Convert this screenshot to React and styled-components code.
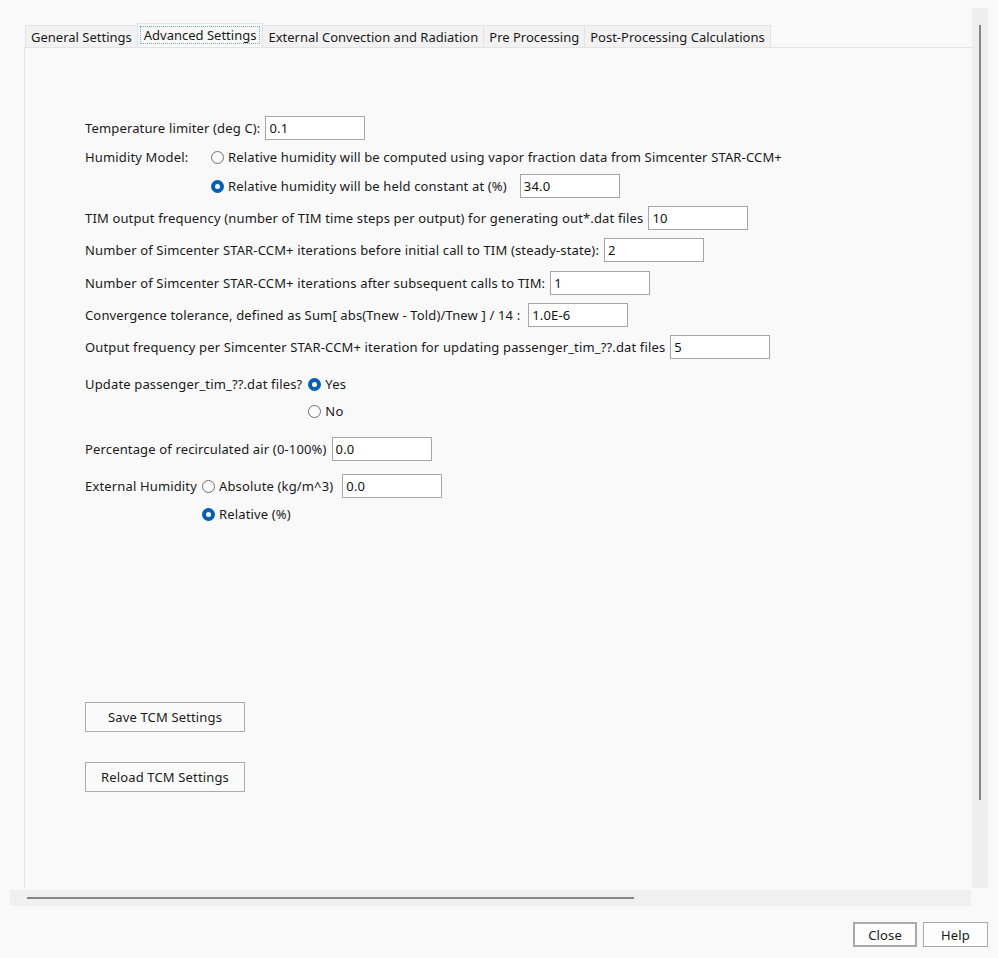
import React from "react";
import styled, { createGlobalStyle, css } from "styled-components";

const Global = createGlobalStyle`
  html, body { margin: 0; padding: 0; background: #f9f9f9; }
  body { font-family: "Noto Sans", "Open Sans", sans-serif; color: #1a1a1a; }
  * { box-sizing: border-box; }
`;

const Window = styled.div`
  width: 998px;
  height: 958px;
  background: #f9f9f9;
  padding: 8px 0 0 10px;
  display: flex;
  flex-direction: column;
  font-size: 13px;
  letter-spacing: 0.15px;
  overflow: hidden;
`;

const Viewport = styled.div`
  display: flex;
  height: 880px;
`;

const Scroller = styled.div`
  width: 962px;
  display: flex;
  flex-direction: column;
  padding-top: 15px;
`;

const TabStrip = styled.div`
  display: flex;
  align-items: flex-end;
  padding-left: 16px;
  height: 24px;
  letter-spacing: 0;
`;

const Tab = styled.div`
  height: 22px;
  padding: 0 5px;
  display: flex;
  align-items: center;
  background: #f2f2f2;
  border: 1px solid #e3e3e3;
  border-bottom: none;
  margin-left: -1px;
  white-space: nowrap;
  ${(p) =>
    p.$active &&
    css`
      height: 24px;
      background: #f9f9f9;
      padding: 2px 2px 3px;
      align-items: stretch;
    `}
`;

const FocusLabel = styled.span`
  display: flex;
  align-items: center;
  padding: 0 3px;
  border: 1px dotted #6aaecb;
`;

const Panel = styled.div`
  flex: 1;
  margin-left: 14px;
  border-left: 1px solid #e3e3e3;
  border-top: 1px solid #e3e3e3;
  padding: 68px 0 0 60px;
  display: flex;
  flex-direction: column;
  align-items: flex-start;
`;

const Row = styled.div`
  display: flex;
  align-items: center;
  min-height: 24px;
  margin-top: ${(p) => p.$mt || 0}px;
  white-space: nowrap;
`;

const Block = styled.div`
  display: flex;
  align-items: flex-start;
  margin-top: ${(p) => p.$mt || 0}px;
  white-space: nowrap;
`;

const Label = styled.span`
  display: inline-flex;
  align-items: center;
  height: 24px;
  min-width: ${(p) => (p.$w ? `${p.$w}px` : "auto")};
  margin-right: ${(p) => p.$gap ?? 5}px;
`;

const Options = styled.div`
  display: flex;
  flex-direction: column;
  gap: ${(p) => p.$gap || 0}px;
`;

const Option = styled.label`
  display: flex;
  align-items: center;
  height: 24px;
  gap: 4px;
`;

const RadioDot = styled.span`
  width: 13px;
  height: 13px;
  border-radius: 50%;
  flex: none;
  ${(p) =>
    p.$on
      ? css`
          background: #005fb8;
          display: flex;
          align-items: center;
          justify-content: center;
          &::after {
            content: "";
            width: 5px;
            height: 5px;
            border-radius: 50%;
            background: #ffffff;
          }
        `
      : css`
          border: 1px solid #6e6e6e;
          background: #fbfbfb;
        `}
`;

const Field = styled.div`
  width: 100px;
  height: 24px;
  border: 1px solid #a6a6a6;
  background: #ffffff;
  padding: 0 3px;
  display: flex;
  align-items: center;
  margin-left: ${(p) => p.$ml ?? 0}px;
  color: #111;
`;

const PushButton = styled.div`
  width: 160px;
  height: 30px;
  border: 1px solid #acacac;
  background: #fafafa;
  display: flex;
  align-items: center;
  justify-content: center;
  margin-top: ${(p) => p.$mt || 0}px;
`;

const VScroll = styled.div`
  width: 16px;
  background: #eeeeee;
  display: flex;
  justify-content: center;
  padding-top: 17px;
`;

const VThumb = styled.div`
  width: 2px;
  height: 775px;
  background: #868686;
`;

const HScroll = styled.div`
  width: 961px;
  height: 16px;
  margin-top: 2px;
  background: #f0f0f0;
  display: flex;
  align-items: center;
  padding-left: 17px;
`;

const HThumb = styled.div`
  width: 607px;
  height: 2px;
  background: #868686;
`;

const Footer = styled.div`
  display: flex;
  justify-content: flex-end;
  gap: 6px;
  padding-right: 10px;
  margin-top: 16px;
`;

const DialogButton = styled.div`
  height: 25px;
  width: ${(p) => p.$w}px;
  background: #fdfdfd;
  border: ${(p) => (p.$default ? "2px solid #a9a9a9" : "1px solid #a9a9a9")};
  display: flex;
  align-items: center;
  justify-content: center;
`;

const Radio = ({ on, children }) => (
  <Option>
    <RadioDot $on={on} />
    <span>{children}</span>
  </Option>
);

const tabs = [
  "General Settings",
  "Advanced Settings",
  "External Convection and Radiation",
  "Pre Processing",
  "Post-Processing Calculations",
];

export default function App() {
  return (
    <>
      <Global />
      <Window>
        <Viewport>
          <Scroller>
            <TabStrip>
              {tabs.map((t, i) =>
                i === 1 ? (
                  <Tab key={t} $active>
                    <FocusLabel>{t}</FocusLabel>
                  </Tab>
                ) : (
                  <Tab key={t}>{t}</Tab>
                )
              )}
            </TabStrip>
            <Panel>
              <Row>
                <Label>Temperature limiter (deg C):</Label>
                <Field>0.1</Field>
              </Row>

              <Block $mt={5}>
                <Label $w={126} $gap={0}>Humidity Model:</Label>
                <Options $gap={5}>
                  <Radio>Relative humidity will be computed using vapor fraction data from Simcenter STAR-CCM+</Radio>
                  <Row>
                    <Radio on>Relative humidity will be held constant at (%)</Radio>
                    <Field $ml={13}>34.0</Field>
                  </Row>
                </Options>
              </Block>

              <Row $mt={8}>
                <Label>TIM output frequency (number of TIM time steps per output) for generating out*.dat files</Label>
                <Field>10</Field>
              </Row>
              <Row $mt={8}>
                <Label>Number of Simcenter STAR-CCM+ iterations before initial call to TIM (steady-state):</Label>
                <Field>2</Field>
              </Row>
              <Row $mt={9}>
                <Label>Number of Simcenter STAR-CCM+ iterations after subsequent calls to TIM:</Label>
                <Field>1</Field>
              </Row>
              <Row $mt={8}>
                <Label>Convergence tolerance, defined as Sum[ abs(Tnew - Told)/Tnew ] / 14 :</Label>
                <Field $ml={3}>1.0E-6</Field>
              </Row>
              <Row $mt={8}>
                <Label>Output frequency per Simcenter STAR-CCM+ iteration for updating passenger_tim_??.dat files</Label>
                <Field>5</Field>
              </Row>

              <Block $mt={13}>
                <Label $gap={6}>Update passenger_tim_??.dat files?</Label>
                <Options $gap={3}>
                  <Radio on>Yes</Radio>
                  <Radio>No</Radio>
                </Options>
              </Block>

              <Row $mt={14}>
                <Label>Percentage of recirculated air (0-100%)</Label>
                <Field>0.0</Field>
              </Row>

              <Block $mt={13}>
                <Label $gap={5}>External Humidity</Label>
                <Options $gap={4}>
                  <Row>
                    <Radio>Absolute (kg/m^3)</Radio>
                    <Field $ml={9}>0.0</Field>
                  </Row>
                  <Radio on>Relative (%)</Radio>
                </Options>
              </Block>

              <PushButton $mt={176}>Save TCM Settings</PushButton>
              <PushButton $mt={30}>Reload TCM Settings</PushButton>
            </Panel>
          </Scroller>
          <VScroll>
            <VThumb />
          </VScroll>
        </Viewport>
        <HScroll>
          <HThumb />
        </HScroll>
        <Footer>
          <DialogButton $w={64} $default>Close</DialogButton>
          <DialogButton $w={65}>Help</DialogButton>
        </Footer>
      </Window>
    </>
  );
}
